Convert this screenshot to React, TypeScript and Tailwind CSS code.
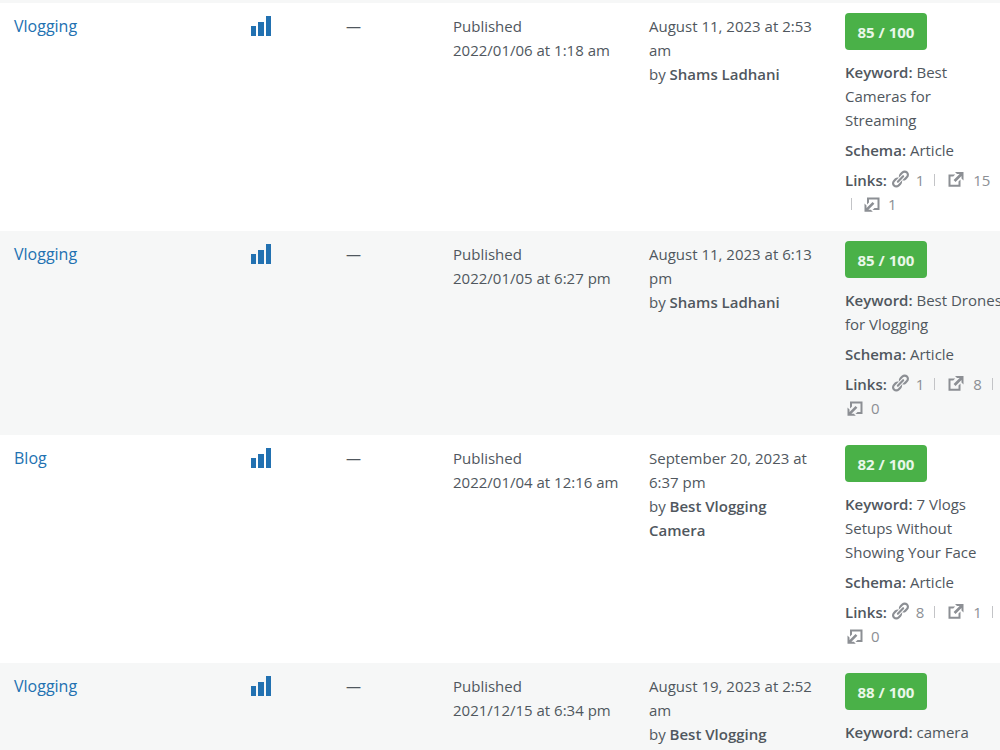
import { Fragment } from "react";

type Post = {
  category: string;
  published: string;
  modified: string[];
  author: string[];
  score: number;
  keyword: string[];
  links: [number, number, number];
  wrapBefore?: boolean;
};

const posts: Post[] = [
  {
    category: "Vlogging",
    published: "2022/01/06 at 1:18 am",
    modified: ["August 11, 2023 at 2:53", "am"],
    author: ["Shams Ladhani"],
    score: 85,
    keyword: ["Best", "Cameras for", "Streaming"],
    links: [1, 15, 1],
    wrapBefore: true,
  },
  {
    category: "Vlogging",
    published: "2022/01/05 at 6:27 pm",
    modified: ["August 11, 2023 at 6:13", "pm"],
    author: ["Shams Ladhani"],
    score: 85,
    keyword: ["Best Drones", "for Vlogging"],
    links: [1, 8, 0],
  },
  {
    category: "Blog",
    published: "2022/01/04 at 12:16 am",
    modified: ["September 20, 2023 at", "6:37 pm"],
    author: ["Best Vlogging", "Camera"],
    score: 82,
    keyword: ["7 Vlogs", "Setups Without", "Showing Your Face"],
    links: [8, 1, 0],
  },
  {
    category: "Vlogging",
    published: "2021/12/15 at 6:34 pm",
    modified: ["August 19, 2023 at 2:52", "am"],
    author: ["Best Vlogging", "Camera"],
    score: 88,
    keyword: ["camera"],
    links: [1, 1, 0],
  },
];

const Lines = ({ items }: { items: string[] }) => (
  <>
    {items.map((item, i) => (
      <Fragment key={item}>
        {i > 0 && <br />}
        {item}
      </Fragment>
    ))}
  </>
);

const StatsIcon = () => (
  <svg className="block h-5 w-5" viewBox="0 0 20 20" fill="currentColor" aria-hidden="true">
    <path d="M0 10h5v10H0zM7 6h6v14H7zM15 0h5v20h-5z" />
  </svg>
);

const LinkIcon = () => (
  <svg className="-ml-px inline-block h-5 w-5 align-[-3px]" viewBox="0 0 20 20" fill="currentColor" aria-hidden="true">
    <path d="M17.74 2.76c1.68 1.69 1.68 4.41 0 6.1l-1.53 1.52c-1.12 1.12-2.7 1.47-4.14 1.09l2.62-2.61.76-.77.76-.76c.84-.84.84-2.2 0-3.04-.84-.85-2.2-.85-3.04 0l-.77.76-3.38 3.38c-.37-1.44-.02-3.02 1.1-4.14l1.52-1.53c1.69-1.68 4.42-1.68 6.1 0zM8.59 13.43l5.34-5.34c.42-.42.42-1.1 0-1.52-.44-.43-1.13-.39-1.53 0l-5.33 5.34c-.42.42-.42 1.1 0 1.52.44.43 1.13.39 1.52 0zm-.76 2.29l4.14-4.15c.38 1.44.03 3.02-1.09 4.14l-1.52 1.53c-1.69 1.68-4.41 1.68-6.1 0-1.68-1.68-1.68-4.42 0-6.1l1.53-1.52c1.12-1.12 2.7-1.47 4.14-1.1l-4.14 4.15c-.85.84-.85 2.2 0 3.05.84.84 2.2.84 3.04 0z" />
  </svg>
);

const ExternalIcon = () => (
  <svg className="inline-block h-5 w-5 align-[-4px]" viewBox="0 0 20 20" fill="currentColor" aria-hidden="true">
    <path d="M10 2h8.5v8.5l-2-2V5.9l-6 6-1.9-1.9 6-6H12zM13.5 14.8v-3.4l2-2v7.4H3.5V4.5h6.7l-2 2H5.5v8.3z" />
  </svg>
);

const IncomingIcon = () => (
  <svg className="inline-block h-5 w-5 align-[-5px]" viewBox="0 0 20 20" fill="currentColor" aria-hidden="true">
    <path d="M5 2.5h12.5V15h-7l2-2h3V4.5H7v3l-2 2zM2.5 8.5l2 2v2.4l6-6 1.9 1.9-6 6h2.4l2 2H2.5z" />
  </svg>
);

const Divider = () => <span className="mr-2.5 ml-2.5 inline-block h-3 w-px bg-[#c3c4c7]" />;

const LinkCounts = ({ links, wrapBefore }: Pick<Post, "links" | "wrapBefore">) => (
  <p className="mt-1.5 text-[#8c8f94]">
    <strong className="font-semibold text-[#50575e]">Links:</strong>{" "}
    <LinkIcon /> <span className="ml-0.5">{links[0]}</span>
    <Divider />
    <ExternalIcon /> <span className="ml-1">{links[1]}</span>
    {wrapBefore ? (
      <>
        <br />
        <span className="mr-2.5 ml-1.5 inline-block h-3 w-px bg-[#c3c4c7]" />
      </>
    ) : (
      <>
        <Divider />
        <br />
      </>
    )}
    <IncomingIcon /> <span className="ml-0.5">{links[2]}</span>
  </p>
);

const PostRow = ({ post }: { post: Post }) => (
  <tr className="bg-white align-top even:bg-[#f6f7f7]">
    <td className="pt-[11px] pl-3.5">
      <a href="#" className="text-base text-[#2271b1]">{post.category}</a>
    </td>
    <td className="pt-[13px]">
      <a href="#" aria-label="View stats" className="inline-block text-[#2271b1]">
        <StatsIcon />
      </a>
    </td>
    <td className="pt-[11px]">—</td>
    <td className="pt-[11px]">
      Published
      <br />
      {post.published}
    </td>
    <td className="pt-[11px]">
      <Lines items={post.modified} />
      <br />
      by <strong className="font-semibold"><Lines items={post.author} /></strong>
    </td>
    <td className="pt-2.5 pb-[15px]">
      <span className="block h-[37px] w-[82px] rounded bg-[#4ab148] text-center leading-[38px] font-bold text-[#e9f7e8]">
        {post.score} / 100
      </span>
      <p className="mt-2.5">
        <strong className="font-semibold">Keyword:</strong> <Lines items={post.keyword} />
      </p>
      <p className="mt-1.5">
        <strong className="font-semibold">Schema:</strong> Article
      </p>
      <LinkCounts links={post.links} wrapBefore={post.wrapBefore} />
    </td>
  </tr>
);

const App = () => (
  <main className="h-screen overflow-hidden border-t-[3px] border-[#f6f7f7] bg-white font-['Open_Sans','Noto_Sans',sans-serif] text-[15px] leading-6 text-[#50575e]">
    <table className="w-full table-fixed border-collapse whitespace-nowrap">
      <colgroup>
        <col className="w-[25.1%]" />
        <col className="w-[9.5%]" />
        <col className="w-[10.7%]" />
        <col className="w-[19.6%]" />
        <col className="w-[19.6%]" />
        <col />
      </colgroup>
      <tbody>
        {posts.map((post) => (
          <PostRow key={post.published} post={post} />
        ))}
      </tbody>
    </table>
  </main>
);

export default App;
